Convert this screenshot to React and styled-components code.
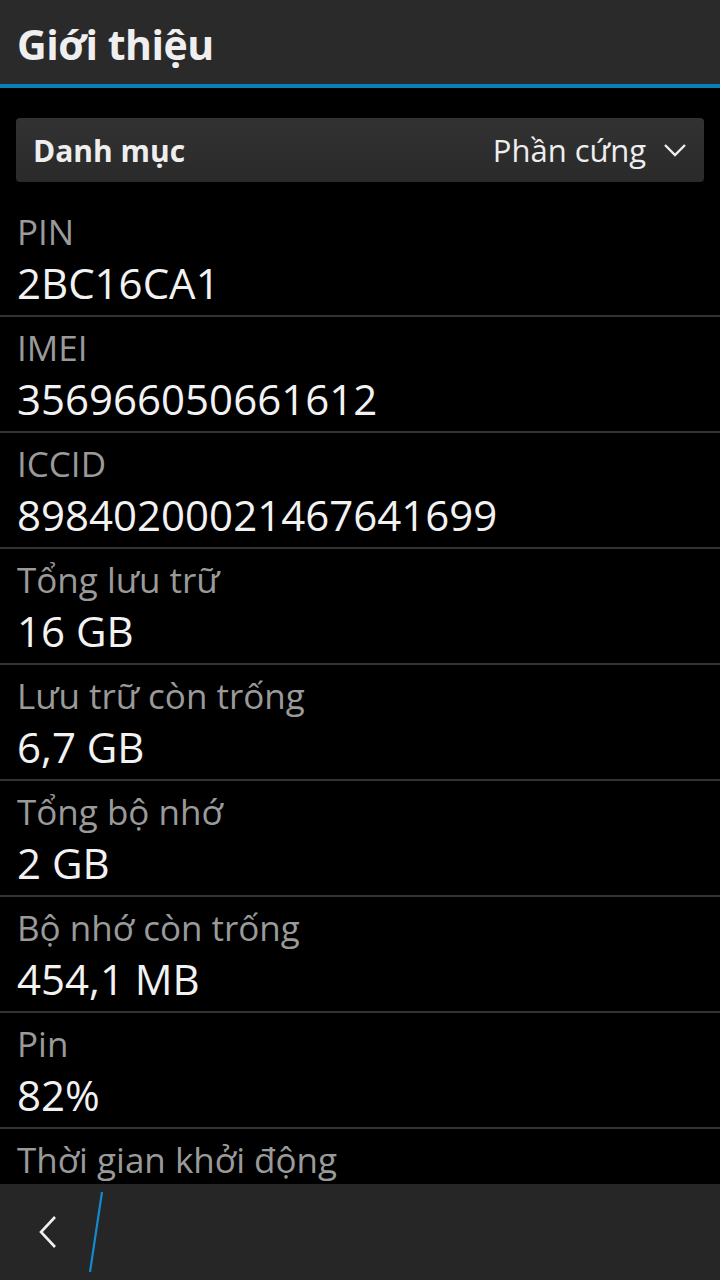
import styled, { createGlobalStyle } from "styled-components";

const GlobalStyle = createGlobalStyle`
  html, body {
    margin: 0;
    padding: 0;
    background: #000;
  }
  * {
    box-sizing: border-box;
  }
`;

const font = `"Open Sans", "Noto Sans", "DejaVu Sans", sans-serif`;

const Screen = styled.div`
  width: 720px;
  height: 1280px;
  display: flex;
  flex-direction: column;
  background: #000;
  font-family: ${font};
  overflow: hidden;
`;

const TitleBar = styled.header`
  flex: 0 0 88px;
  display: flex;
  align-items: center;
  padding: 4px 0 0 17px;
  background: #2a2a2a;
  border-bottom: 4px solid #0a80b8;
`;

const Title = styled.h1`
  margin: 0;
  font-size: 41px;
  font-weight: 700;
  letter-spacing: -0.5px;
  color: #efefef;
`;

const Content = styled.main`
  flex: 1;
  overflow: hidden;
  padding-top: 30px;
`;

const Dropdown = styled.div`
  margin: 0 16px;
  height: 64px;
  display: flex;
  align-items: center;
  justify-content: space-between;
  padding: 0 17px;
  border-radius: 4px;
  background: linear-gradient(#323232, #2a2a2a);
  color: #eeeeee;
`;

const DropLabel = styled.span`
  font-size: 30px;
  font-weight: 700;
`;

const DropValue = styled.span`
  display: flex;
  align-items: center;
  gap: 17px;
  font-size: 31px;
`;

const List = styled.div`
  margin-top: 19px;
`;

const Row = styled.div`
  padding: 8px 17px 4px;
  border-bottom: 2px solid #333333;
`;

const Label = styled.div`
  font-size: 35px;
  line-height: 46px;
  color: #9a9a9a;
  white-space: nowrap;
`;

const Value = styled.div`
  font-size: 42px;
  line-height: 56px;
  color: #f2f2f2;
  white-space: nowrap;
`;

const ActionBar = styled.footer`
  flex: 0 0 96px;
  display: flex;
  align-items: center;
  background: #262626;
  padding-left: 38px;
  gap: 30px;
`;

const BackButton = styled.button`
  border: 0;
  padding: 0;
  background: none;
  display: flex;
  align-items: center;
  cursor: pointer;
`;

const Chevron = () => (
  <svg width="24" height="16" viewBox="0 0 24 16">
    <path d="M2 3 L12 13 L22 3" fill="none" stroke="#eeeeee" strokeWidth="2.4" />
  </svg>
);

const BackIcon = () => (
  <svg width="20" height="34" viewBox="0 0 20 34">
    <path d="M17 2 L3 17 L17 32" fill="none" stroke="#f0f0f0" strokeWidth="2.6" />
  </svg>
);

const Slash = () => (
  <svg width="16" height="82" viewBox="0 0 16 82">
    <line x1="14" y1="1" x2="2" y2="81" stroke="#118bd0" strokeWidth="2.2" />
  </svg>
);

const items = [
  { label: "PIN", value: "2BC16CA1" },
  { label: "IMEI", value: "356966050661612" },
  { label: "ICCID", value: "89840200021467641699" },
  { label: "Tổng lưu trữ", value: "16 GB" },
  { label: "Lưu trữ còn trống", value: "6,7 GB" },
  { label: "Tổng bộ nhớ", value: "2 GB" },
  { label: "Bộ nhớ còn trống", value: "454,1 MB" },
  { label: "Pin", value: "82%" },
  { label: "Thời gian khởi động", value: "" },
];

export default function App() {
  return (
    <>
      <GlobalStyle />
      <Screen>
        <TitleBar>
          <Title>Giới thiệu</Title>
        </TitleBar>
        <Content>
          <Dropdown>
            <DropLabel>Danh mục</DropLabel>
            <DropValue>
              Phần cứng
              <Chevron />
            </DropValue>
          </Dropdown>
          <List>
            {items.map((item) => (
              <Row key={item.label}>
                <Label>{item.label}</Label>
                <Value>{item.value || "\u00a0"}</Value>
              </Row>
            ))}
          </List>
        </Content>
        <ActionBar>
          <BackButton aria-label="Quay lại">
            <BackIcon />
          </BackButton>
          <Slash />
        </ActionBar>
      </Screen>
    </>
  );
}
